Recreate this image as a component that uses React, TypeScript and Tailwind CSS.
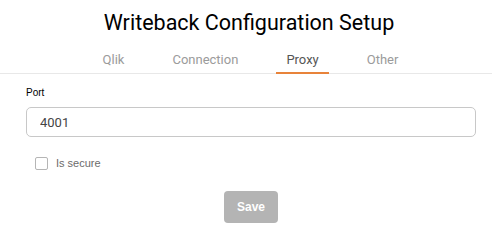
import { useState } from "react";

const tabs = ["Qlik", "Connection", "Proxy", "Other"];

export default function App() {
  const [active, setActive] = useState("Proxy");
  const [port, setPort] = useState("4001");
  const [secure, setSecure] = useState(false);

  return (
    <div className="min-h-screen bg-white font-['Roboto',sans-serif]">
      {/* Header */}
      <h1 className="pt-[9px] pl-[6px] text-center text-[21.5px] leading-[28px] text-black">
        Writeback Configuration Setup
      </h1>

      {/* Tabs */}
      <div className="mt-[9px] border-b border-[#e8e8e8]">
        <div className="flex justify-center gap-[28px] pl-[9px]">
          {tabs.map((tab) => (
            <button
              key={tab}
              onClick={() => setActive(tab)}
              className={`h-[28px] px-[10px] text-[13px] leading-[28px] border-b-2 -mb-px ${
                active === tab
                  ? "text-[#555] border-[#e8833a]"
                  : "text-[#9b9b9b] border-transparent"
              }`}
            >
              {tab}
            </button>
          ))}
        </div>
      </div>

      {/* Form */}
      <div className="px-[26px] pt-[12px] font-['Liberation_Sans',Arial,sans-serif]">
        <label className="block text-[10px] leading-[14px] text-black">Port</label>
        <input
          value={port}
          onChange={(e) => setPort(e.target.value)}
          className="mt-[7px] block h-[30px] w-[450px] rounded-[5px] border border-[#c8c8c8] px-[13px] text-[13px] text-[#444] font-['Roboto',sans-serif] outline-none"
        />

        <label className="mt-[18px] flex items-center gap-[8px] pl-[9px]">
          <input
            type="checkbox"
            checked={secure}
            onChange={(e) => setSecure(e.target.checked)}
            className="h-[13px] w-[13px] appearance-none rounded-[2px] border border-[#b5b5b5] bg-white checked:bg-[#e8833a]"
          />
          <span className="text-[11px] text-[#6b6b6b]">Is secure</span>
        </label>

        <div className="mt-[19px] flex justify-center pl-[10px]">
          <button className="h-[32px] w-[54px] rounded-[4px] bg-[#b4b4b4] text-[12px] font-bold text-white">
            Save
          </button>
        </div>
      </div>
    </div>
  );
}
